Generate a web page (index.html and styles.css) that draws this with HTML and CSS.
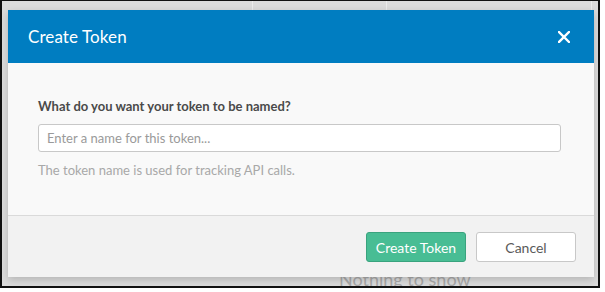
FILE: index.html
```html
<!DOCTYPE html>
<html lang="en">
<head>
  <meta charset="UTF-8" />
  <title>Create Token</title>
  <link rel="stylesheet" href="styles.css">
</head>
<body>

<div class="frame">
  <div class="page">
    <div class="page-head">
      <div class="cell c1"></div>
      <div class="cell c2"></div>
      <div class="cell c3"></div>
      <div class="cell c4"></div>
    </div>
    <div class="empty">Nothing to show</div>
  </div>

  <div class="modal">
    <div class="modal-head">
      <h3>Create Token</h3>
      <button class="close" aria-label="Close">
        <svg width="12" height="12" viewBox="0 0 12 12">
          <path d="M1 1 L11 11 M11 1 L1 11" stroke="#fff" stroke-width="2.4" stroke-linecap="square"/>
        </svg>
      </button>
    </div>
    <div class="modal-body">
      <label for="token-name">What do you want your token to be named?</label>
      <input id="token-name" type="text" placeholder="Enter a name for this token..." autofocus>
      <p class="help">The token name is used for tracking API calls.</p>
    </div>
    <div class="modal-foot">
      <button class="btn btn-primary">Create Token</button>
      <button class="btn">Cancel</button>
    </div>
  </div>
</div>

</body>
</html>
```

FILE: styles.css
```css
* { box-sizing: border-box; }
body {
  margin: 0;
  background: #fff;
  font-family: 'Lato', 'Open Sans', sans-serif;
}
.frame {
  width: 600px;
  height: 288px;
  border: 2px solid #111;
  border-top-width: 1px;
  background: #dcdcdc;
  position: relative;
  overflow: hidden;
}
.page {
  padding: 0 6px;
}
.page-head {
  display: flex;
  height: 35px;
  border-bottom: 1px solid #ececec;
}
.cell {
  border-right: 1px solid #ececec;
}
.c1 { width: 246px; }
.c2 { width: 134px; }
.c3 { width: 206px; }
.c4 { flex: 1; border-right: none; }
.empty {
  padding: 232px 0 0 331px;
  line-height: 22px;
  font-size: 18px;
  color: #a9a9a9;
}
.modal {
  position: absolute;
  top: 9px;
  left: 6px;
  width: 586px;
  background: #f9f9f9;
  box-shadow: 0 3px 8px rgba(0, 0, 0, 0.18);
}
.modal-head {
  background: #007dc1;
  height: 53px;
  display: flex;
  align-items: center;
  justify-content: space-between;
  padding: 0 24px 0 20px;
}
.modal-head h3 {
  margin: 0;
  color: #fff;
  font-size: 17px;
  font-weight: normal;
  letter-spacing: 0.1px;
}
.close {
  background: none;
  border: none;
  padding: 0;
  display: flex;
  cursor: pointer;
}
.modal-body {
  height: 152px;
  padding: 35px 33px 0 30px;
}
.modal-body label {
  display: block;
  font-size: 13px;
  font-weight: bold;
  color: #4a4a4a;
  line-height: 16px;
  margin-bottom: 10px;
}
.modal-body input {
  display: block;
  width: 100%;
  height: 28px;
  border: 1px solid #c8c8c8;
  border-radius: 3px;
  background: #fff;
  padding: 0 8px;
  font-family: inherit;
  font-size: 13px;
  color: #333;
  outline: none;
}
.modal-body input::placeholder {
  color: #9a9a9a;
}
.help {
  margin: 10px 0 0;
  font-size: 13px;
  line-height: 16px;
  color: #a8a8a8;
}
.modal-foot {
  height: 62px;
  background: #f2f2f2;
  border-top: 1px solid #dadada;
  display: flex;
  justify-content: flex-end;
  gap: 10px;
  padding: 16px 18px 0 0;
}
.btn {
  width: 100px;
  height: 30px;
  border: 1px solid #c8c8c8;
  border-radius: 3px;
  background: #fff;
  font-family: inherit;
  font-size: 14px;
  color: #5a5a5a;
  cursor: pointer;
}
.btn-primary {
  background: #48bd94;
  border-color: #3aa37e;
  color: #fff;
}
```
